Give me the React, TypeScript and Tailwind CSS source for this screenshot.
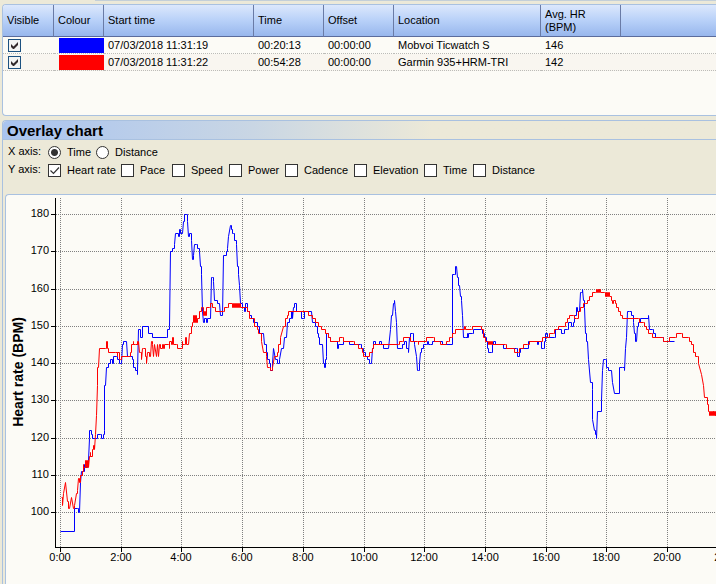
import { useState } from 'react';

type Lap = { start: number; points: string };

const PLOT = { zero: 54, top: 3, bottom: 352 };
const TICKS_PER_PIXEL = 3;
const GRID_MINUTES = [0, 2, 4, 6, 8, 10, 12, 14, 16, 18, 20, 22];
const GRID_BPM = [180, 170, 160, 150, 140, 130, 120, 110, 100];

// Each lap holds tick,bpm pairs, ticks counted from the lap's start
const ticwatch: Lap[] = [
  {
    start: -180,
    points:
      '181,95 221,95 223,101 230,101 233,100 236,100 239,108 243,111 248,111 252,113 255,112 260,113 264,114 266,120 268,122 272,121 276,120 286,120 290,121 301,121 304,120 308,121 311,122 313,134 315,134 318,139 324,140 330,141 335,140 340,142 348,142 352,141 357,140 362,140 365,145 370,146 378,146 380,142 390,142 395,141 400,139 405,138 410,137 412,138 415,149 420,149 421,147 426,147 427,150',
  },
  {
    start: 240,
    points:
      '23,150 25,148 35,148 37,147 77,147 80,149 87,150 91,170 97,171 103,172 105,175 113,174 118,176 120,175 126,175 130,178 133,180 137,180 140,178 145,174 148,175 152,173 155,168 160,169 163,172 169,172 170,171 177,170 180,166 183,164 185,154 190,151 193,152 198,151 201,152 211,152 212,163 215,163 220,162 223,157 230,156 237,156 240,153 246,153 250,169 257,170 260,171 265,174 269,177 273,176 275,175 280,175 283,173 289,172 292,166 295,164 298,161 301,156 305,155 312,154 316,156 320,154 326,153 333,152 340,151 350,150 358,148 368,148 373,145 378,143 382,141 388,140 391,138 395,140 400,144 405,141 410,140 417,141 422,144 430,144',
  },
  {
    start: 660,
    points:
      '10,144 13,147 18,147 22,151 28,152 32,154 37,152 40,155 43,156 47,154 60,154 62,152 70,152 73,154 94,154 96,151 105,150 110,148 115,147 118,145 127,145 129,140 132,139 134,141 137,142 138,148 145,147 150,146 167,146 170,144 175,145 188,145 190,146 205,146 206,145 240,145 242,144 250,143 255,142 262,141 267,140 273,140 277,144 280,146 285,145 293,145 297,146 302,145 310,144 325,144 330,149 332,153 337,153 340,156 343,157 346,154 348,151 350,144 362,144 366,145 372,146 378,144 384,143 388,147 390,148 395,148 398,146 403,145 407,142 410,138 413,138 416,140 420,143 424,144 428,145',
  },
  {
    start: 1080,
    points:
      '17,145 20,146 23,145 30,145 35,146 65,146 66,145 95,145 97,164 101,164 104,166 107,166 110,163 113,161 117,161 120,158 123,157 125,153 128,147 136,147 140,148 142,147 145,148 157,148 160,149 182,149 186,148 192,147 197,146 200,144 205,143 212,143 216,145 220,146 224,145 247,145 248,144 287,144 292,142 296,143 300,144 323,144 325,146 347,146 350,145 353,146 362,146 363,144 368,144 372,146 375,148 380,148 382,147 403,147 405,149 415,149 422,148',
  },
  {
    start: 1500,
    points:
      '10,148 12,149 22,149 25,151 33,150 38,151 43,153 47,155 52,154 57,154 60,159 64,159 67,160 70,157 73,155 75,148 77,146 80,146 84,141 90,135 95,133 97,125 103,122 106,121 109,120 112,127 122,127 124,130 127,138 130,141 134,141 137,139 145,138 152,138 157,135 162,132 176,132 178,139 187,139 191,138 195,144 199,147 201,154 208,154 212,153 218,151 222,148 224,146 229,146 231,150 235,151 240,152 264,152 265,153 266,149 275,149 280,148 285,147 305,147 310,146 341,146',
  },
];

const garmin: Lap[] = [
  {
    start: -180,
    points:
      '183,104 185,102 190,105 196,108 200,103 203,101 208,101 213,104 218,101 221,101 223,102 227,105 232,106 234,109 237,108 240,110 246,111 248,113 250,112 254,114 257,112 260,114 263,112 266,115 269,116 271,115 275,117 279,118 282,117 284,121 287,126 290,134 292,139 295,139 298,144 315,144 318,146 320,144 325,143 345,143 350,142 352,143 357,141 360,141 363,142 388,142 390,143 394,145 398,146 400,145 406,145 410,146 412,145 414,146 416,143 420,143',
  },
  {
    start: 240,
    points:
      '3,141 7,144 10,144 14,142 17,140 22,143 26,142 30,142 34,146 37,145 40,142 43,145 47,142 50,145 53,142 57,145 60,144 65,145 68,144 73,145 83,145 86,144 88,146 93,145 97,147 100,145 108,145 112,144 122,144 125,146 127,145 133,145 135,147 137,145 143,145 148,148 152,150 157,151 159,153 162,151 165,153 168,151 172,152 177,154 182,155 186,155 188,153 191,154 194,153 198,155 208,155 211,156 215,155 222,155 225,154 248,154 252,155 261,155 263,156 275,156 277,155 279,156 281,155 284,156 287,155 290,156 293,155 298,156 301,155 315,155 320,154 328,152 335,152 343,150 350,149 355,148 363,146 370,143 377,142 382,139 387,139 390,138 394,138 397,139 402,142 410,143 415,145',
  },
  {
    start: 660,
    points:
      '0,147 8,150 15,152 20,153 25,154 83,154 84,153 95,153 97,152 104,151 113,150 122,149 135,148 143,147 150,146 175,146 178,147 187,147 190,146 218,146 222,145 232,145 233,144 240,144 245,143 250,142 262,142 268,143 275,144 279,145 353,145 356,146 367,146 370,147 388,147 390,146 411,146 413,145 415,146',
  },
  {
    start: 1080,
    points:
      '17,146 19,147 40,147 42,146 57,146 59,145 76,145 77,146 84,146 86,147 93,147 95,148 103,148 104,149 131,149 133,150 135,149 152,149 155,150 180,150 184,149 189,147 194,146 202,146 204,145 207,146 210,145 213,146 215,145 256,145 257,144 280,144 282,143 293,143 297,144 307,144 309,145 322,145 326,146 363,146 367,147 383,147 386,148 398,148 402,149 412,149 414,150',
  },
  {
    start: 1500,
    points:
      '12,150 15,151 22,152 26,153 40,153 42,152 48,152 53,154 60,155 70,156 75,156 80,157 88,158 95,159 106,159 108,160 111,159 113,160 116,159 118,160 120,159 133,159 135,158 138,159 141,158 145,159 148,158 152,157 156,156 160,157 164,156 168,155 175,154 180,153 186,152 235,152 237,151 249,151 252,150 258,149 265,148 272,148 275,147 306,147 308,146 325,146 328,147 346,147 349,148 364,148 367,147 383,147 387,146 393,145 400,143 405,142 411,142 415,140 422,137 428,134 433,131 440,129 444,127 447,127 448,126 450,127 453,126 455,127 458,126 460,127 462,126 464,127 465,126 480,126',
  },
];

const bpmToY = (bpm: number) => 19 + Math.round(((180 - bpm) * 298) / 80);
const minuteToX = (minute: number) => PLOT.zero + Math.round(minute * 30.35);

function toPath(laps: Lap[]) {
  const samples = laps.flatMap(({ start, points }) =>
    points.split(' ').map((pair) => {
      const [tick, bpm] = pair.split(',').map(Number);
      return { x: PLOT.zero + Math.round((start + tick) / TICKS_PER_PIXEL) + 0.5, bpm };
    })
  );

  // Small changes are drawn as steps, larger ones as a slope
  return samples
    .map(({ x, bpm }, i) => {
      const y = bpmToY(bpm) + 0.5;
      if (i === 0) return `M${x} ${y}`;
      return Math.abs(bpm - samples[i - 1].bpm) <= 2 ? `H${x}V${y}` : `L${x} ${y}`;
    })
    .join('');
}

const activities = [
  { start: '07/03/2018 11:31:19', time: '00:20:13', offset: '00:00:00', location: 'Mobvoi Ticwatch S', hr: 146, swatch: 'bg-[#0000ff]', row: 'bg-[#fcfbf6]' },
  { start: '07/03/2018 11:31:22', time: '00:54:28', offset: '00:00:00', location: 'Garmin 935+HRM-TRI', hr: 142, swatch: 'bg-[#ff0000]', row: 'bg-[#f9f6f0]' },
];

const columns = ['Visible', 'Colour', 'Start time', 'Time', 'Offset', 'Location', 'Avg. HR (BPM)'];
const metrics = ['Heart rate', 'Pace', 'Speed', 'Power', 'Cadence', 'Elevation', 'Time', 'Distance'];

function ActivityTable() {
  const [visible, setVisible] = useState([true, true]);

  return (
    <section className="ml-[2px] h-[112px] overflow-hidden rounded-l border border-r-0 border-[#a9c1e0] bg-[#fcfbf6]">
      <table className="w-full table-fixed border-separate border-spacing-0 text-left">
        <colgroup>
          <col className="w-[51px]" />
          <col className="w-[50px]" />
          <col className="w-[150px]" />
          <col className="w-[70px]" />
          <col className="w-[70px]" />
          <col className="w-[147px]" />
          <col className="w-[80px]" />
          <col />
        </colgroup>
        <thead>
          <tr className="h-8 bg-linear-to-b from-[#dce8fc] via-[#b7d0f8] to-[#96b5ec]">
            {columns.map((column) => (
              <th
                key={column}
                scope="col"
                className="border-r border-b border-r-[#6a7ba6] border-b-[#5b6c9c] py-0 pr-6 pl-1 font-normal leading-[13px] whitespace-nowrap last-of-type:whitespace-normal"
              >
                {column}
              </th>
            ))}
            <td className="border-b border-[#5b6c9c]" />
          </tr>
        </thead>
        <tbody>
          {activities.map((activity, index) => (
            <tr key={activity.start} className={`h-[17px] leading-4 ${activity.row}`}>
              <td className="border-b border-dotted border-[#bcbcb8] p-0 pl-[5px]">
                <span className="relative block size-[13px]">
                  <input
                    type="checkbox"
                    aria-label={`Show ${activity.location}`}
                    checked={visible[index]}
                    onChange={() => setVisible(visible.map((v, i) => (i === index ? !v : v)))}
                    className="peer block size-[13px] appearance-none border border-[#1c5180] bg-[#f4f4f2]"
                  />
                  <svg className="pointer-events-none absolute inset-0 hidden peer-checked:block" width="13" height="13" viewBox="0 0 13 13">
                    <path d="M3 5v3l2 2h1l4-4V3L5.500 7.500z" fill="#33292a" />
                  </svg>
                </span>
              </td>
              <td className="border-b border-dotted border-[#bcbcb8] p-0 pl-[5px]">
                <div className={`h-[15px] ${activity.swatch}`} />
              </td>
              <td className="border-b border-dotted border-[#bcbcb8] p-0 pl-1">{activity.start}</td>
              <td className="border-b border-dotted border-[#bcbcb8] p-0 pl-1">{activity.time}</td>
              <td className="border-b border-dotted border-[#bcbcb8] p-0 pl-1">{activity.offset}</td>
              <td className="border-b border-dotted border-[#bcbcb8] p-0 pl-1">{activity.location}</td>
              <td className="border-b border-dotted border-[#bcbcb8] p-0 pl-1">{activity.hr}</td>
              <td className="border-b border-dotted border-[#bcbcb8] p-0" />
            </tr>
          ))}
        </tbody>
      </table>
    </section>
  );
}

function AxisOptions() {
  const [xAxis, setXAxis] = useState('Time');
  const [yAxis, setYAxis] = useState(['Heart rate']);

  const toggleMetric = (metric: string) =>
    setYAxis(yAxis.includes(metric) ? yAxis.filter((m) => m !== metric) : [...yAxis, metric]);

  return (
    <div className="flex flex-col gap-px pt-[3px] pl-[5px] leading-4">
      <fieldset className="flex">
        <legend className="float-left w-10">X axis:</legend>
        <div className="grid grid-cols-[48px_auto] pt-px">
          {['Time', 'Distance'].map((option) => (
            <label key={option} className="flex items-center gap-[6px]">
              <input
                type="radio"
                name="x-axis"
                checked={xAxis === option}
                onChange={() => setXAxis(option)}
                className="size-[13px] shrink-0 appearance-none rounded-full border border-[#333333] bg-white checked:bg-[radial-gradient(circle,#333333_3px,white_4px)]"
              />
              {option}
            </label>
          ))}
        </div>
      </fieldset>
      <fieldset className="flex">
        <legend className="float-left w-10">Y axis:</legend>
        <div className="grid grid-cols-[73px_51px_57px_56px_69px_70px_49px_auto] pt-px">
          {metrics.map((metric) => (
            <label key={metric} className="relative flex items-center gap-[6px] whitespace-nowrap">
              <input
                type="checkbox"
                checked={yAxis.includes(metric)}
                onChange={() => toggleMetric(metric)}
                className="peer size-[13px] shrink-0 appearance-none border border-[#333333] bg-white"
              />
              <svg className="pointer-events-none absolute left-0 hidden peer-checked:block" width="13" height="13" viewBox="0 0 13 13">
                <path d="M2.500 6.500l3 3 5.500-6" fill="none" stroke="#333333" strokeWidth="1.200" />
              </svg>
              {metric}
            </label>
          ))}
        </div>
      </fieldset>
    </div>
  );
}

function HeartRateChart() {
  return (
    <svg className="block h-[388px] w-full" role="img" aria-label="Heart rate over time">
      <g stroke="#808080" strokeDasharray="1 1" shapeRendering="crispEdges">
        {GRID_BPM.map((bpm) => (
          <line key={bpm} x1={PLOT.zero - 4} x2="100%" y1={bpmToY(bpm) + 0.5} y2={bpmToY(bpm) + 0.5} />
        ))}
        {GRID_MINUTES.map((minute) => (
          <line key={minute} x1={minuteToX(minute) + 0.5} x2={minuteToX(minute) + 0.5} y1={PLOT.top} y2={PLOT.bottom} />
        ))}
      </g>

      <path d={toPath(ticwatch)} fill="none" stroke="#0000ff" />
      <path d={toPath(garmin)} fill="none" stroke="#ff0000" />

      {/* Axes */}
      <g stroke="#000000" shapeRendering="crispEdges">
        <line x1={49.5} x2={49.5} y1={PLOT.top} y2={PLOT.bottom + 1} />
        <line x1={49} x2="100%" y1={PLOT.bottom + 0.5} y2={PLOT.bottom + 0.5} />
        {GRID_BPM.map((bpm) => (
          <line key={bpm} x1={45} x2={49} y1={bpmToY(bpm) + 0.5} y2={bpmToY(bpm) + 0.5} />
        ))}
        {GRID_MINUTES.map((minute) => (
          <line key={minute} x1={minuteToX(minute) + 0.5} x2={minuteToX(minute) + 0.5} y1={PLOT.bottom} y2={PLOT.bottom + 5} />
        ))}
      </g>
      <g>
        {GRID_BPM.map((bpm) => (
          <text key={bpm} x={43} y={bpmToY(bpm) + 3} textAnchor="end">
            {bpm}
          </text>
        ))}
        {GRID_MINUTES.map((minute) => (
          <text key={minute} x={minuteToX(minute)} y={PLOT.bottom + 14} textAnchor="middle">
            {minute}:00
          </text>
        ))}
      </g>
      <text className="text-sm font-bold" transform="translate(17 177) rotate(-90)" textAnchor="middle">
        Heart rate (BPM)
      </text>
    </svg>
  );
}

export default function App() {
  return (
    <main className="flex min-h-screen flex-col bg-[#ece9d8] font-['Liberation_Sans',Arial,sans-serif] text-[11px] text-black">
      <div className="mb-[3px] ml-[95px] h-px bg-[#c3cfd8]" />
      <ActivityTable />
      <section className="mt-1 ml-[2px] flex grow flex-col rounded-tl border-t border-l border-[#a9c1e0]">
        <h2 className="h-[19px] rounded-tl border-b border-[#a9c1e0] bg-linear-to-r from-[#a9c4f0] from-0% via-[#c9d6e4] via-35% to-[#ece9d8] to-60% pl-1 text-[15px] leading-5 font-bold">
          Overlay chart
        </h2>
        <AxisOptions />
        <div className="mt-4 ml-[2px] grow rounded-tl border-t border-l border-[#a9c1e0] bg-[#fcfbf6]">
          <HeartRateChart />
        </div>
      </section>
    </main>
  );
}
